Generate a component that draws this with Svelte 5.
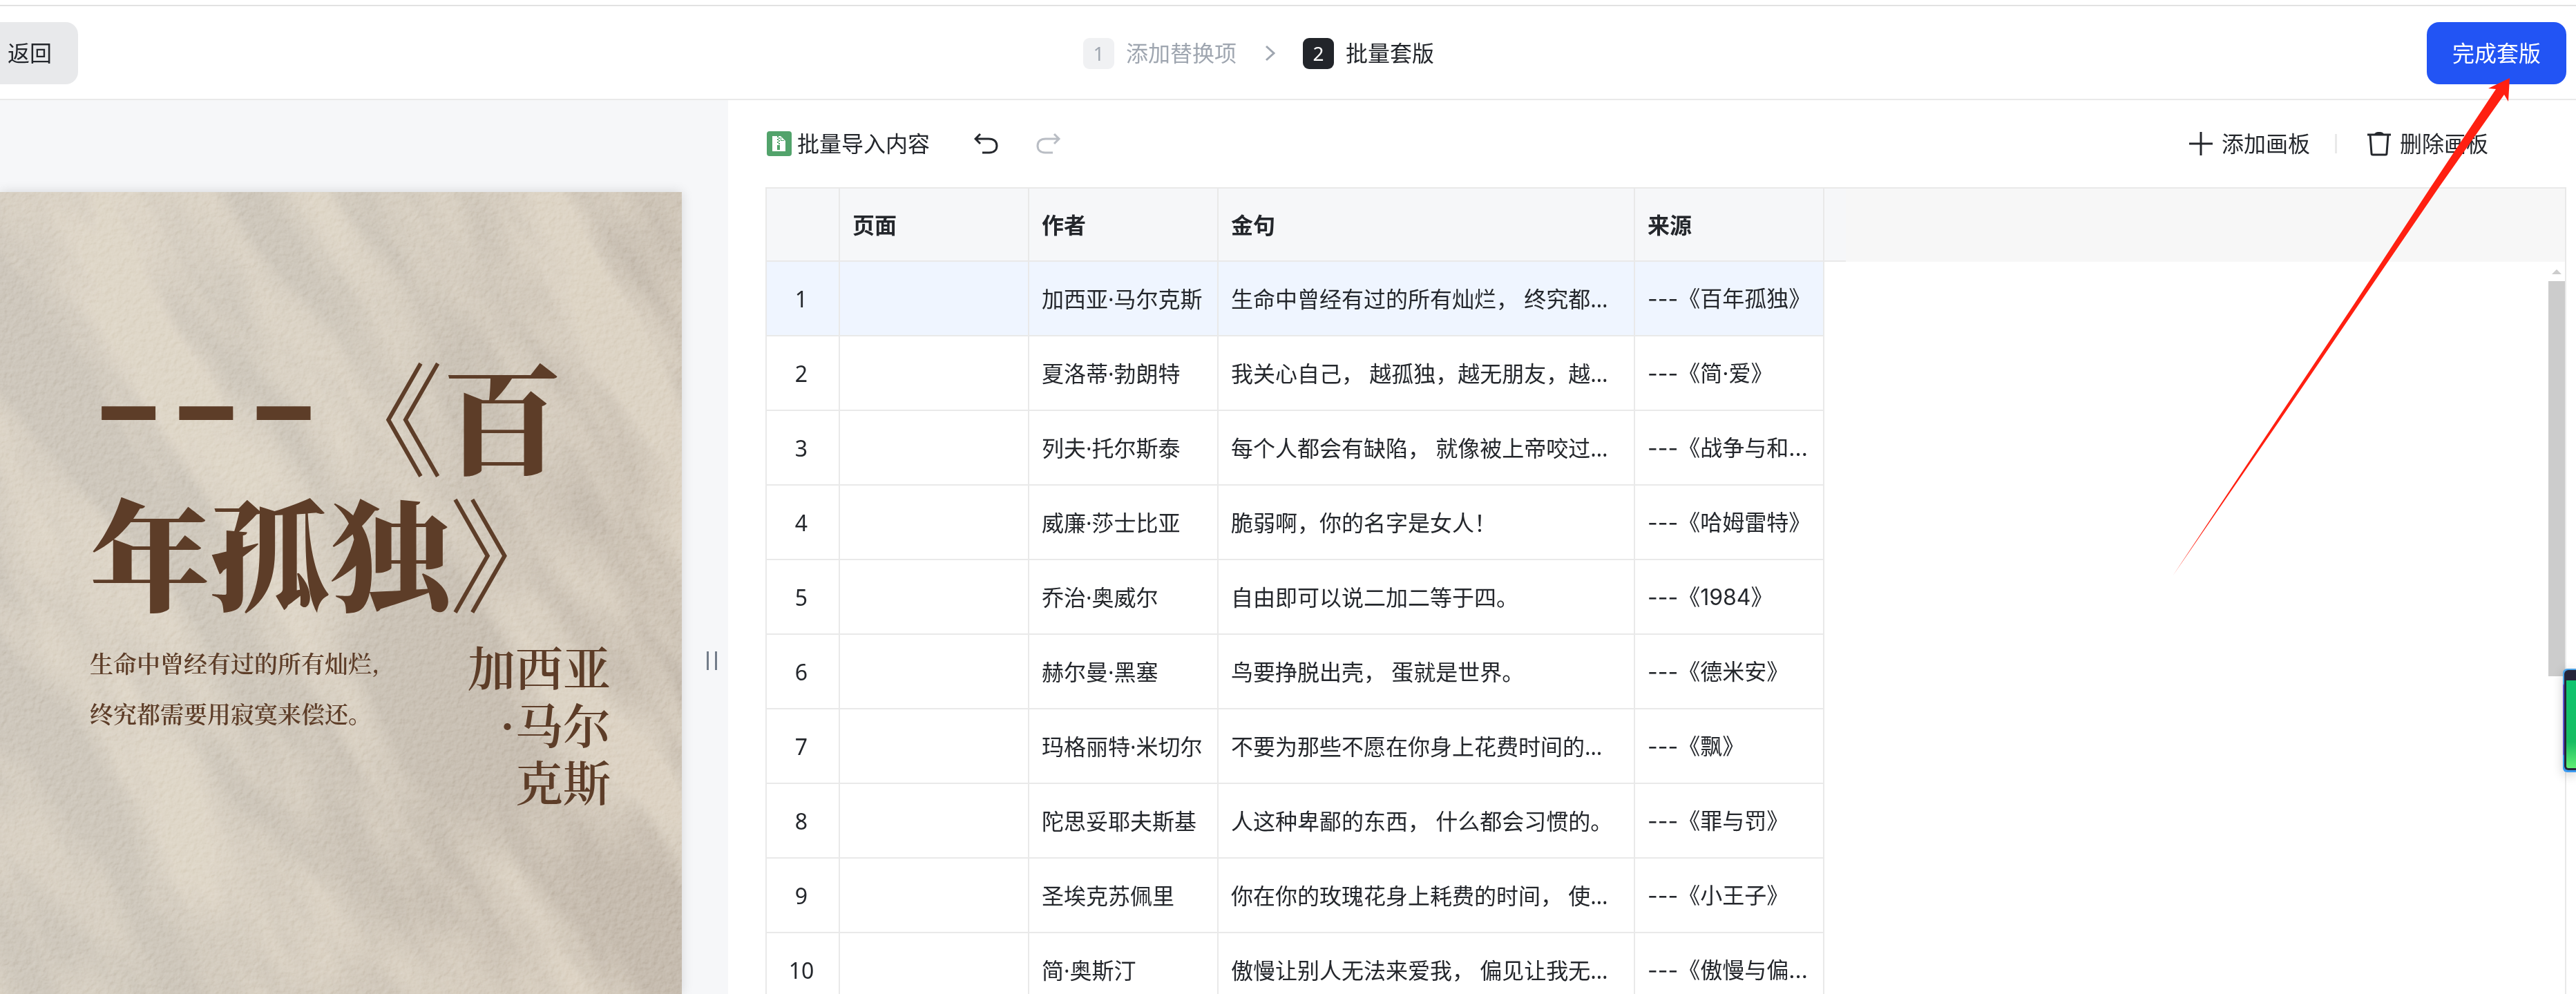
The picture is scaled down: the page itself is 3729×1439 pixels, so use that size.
<script>
	const columns = ['页面', '作者', '金句', '来源']

	let selected = 1

	const rows = [
		{ author: '加西亚·马尔克斯', quote: '生命中曾经有过的所有灿烂， 终究都…', source: '---《百年孤独》' },
		{ author: '夏洛蒂·勃朗特', quote: '我关心自己， 越孤独，越无朋友，越…', source: '---《简·爱》' },
		{ author: '列夫·托尔斯泰', quote: '每个人都会有缺陷， 就像被上帝咬过…', source: '---《战争与和…' },
		{ author: '威廉·莎士比亚', quote: '脆弱啊，你的名字是女人！', source: '---《哈姆雷特》' },
		{ author: '乔治·奥威尔', quote: '自由即可以说二加二等于四。', source: '---《1984》' },
		{ author: '赫尔曼·黑塞', quote: '鸟要挣脱出壳， 蛋就是世界。', source: '---《德米安》' },
		{ author: '玛格丽特·米切尔', quote: '不要为那些不愿在你身上花费时间的…', source: '---《飘》' },
		{ author: '陀思妥耶夫斯基', quote: '人这种卑鄙的东西， 什么都会习惯的。', source: '---《罪与罚》' },
		{ author: '圣埃克苏佩里', quote: '你在你的玫瑰花身上耗费的时间， 使…', source: '---《小王子》' },
		{ author: '简·奥斯汀', quote: '傲慢让别人无法来爱我， 偏见让我无…', source: '---《傲慢与偏…' },
	]
</script>

<div class="app">
	<header>
		<button class="back">返回</button>
		<ol class="steps">
			<li><span class="badge">1</span>添加替换项</li>
			<li class="chevron" aria-hidden="true">
				<svg width="16" height="24" viewBox="0 0 16 24"><path d="M3 2l11 10L3 22" /></svg>
			</li>
			<li class="current"><span class="badge">2</span>批量套版</li>
		</ol>
		<button class="finish">完成套版</button>
	</header>

	<main>
		<section class="preview">
			<article class="poster">
				<svg class="paper" aria-hidden="true">
					<defs>
						<linearGradient id="tone" x1="0" y1="0" x2="1" y2="0.3">
							<stop offset="0" stop-color="#cdc6bb" />
							<stop offset="0.45" stop-color="#cec7bb" />
							<stop offset="1" stop-color="#c5bbae" />
						</linearGradient>
						<filter id="folds" x="0" y="0" width="100%" height="100%" color-interpolation-filters="sRGB">
							<feTurbulence type="fractalNoise" baseFrequency="0.002 0.007" numOctaves="4" seed="8" />
							<feColorMatrix values="0 0 0 0 0.9  0 0 0 0 0.865  0 0 0 0 0.805  3.6 0 0 0 -1.4" />
						</filter>
						<filter id="grain" x="0" y="0" width="100%" height="100%" color-interpolation-filters="sRGB">
							<feTurbulence type="fractalNoise" baseFrequency="0.12" numOctaves="4" seed="3" />
							<feDiffuseLighting surfaceScale="1" lighting-color="#fff">
								<feDistantLight azimuth="225" elevation="32" />
							</feDiffuseLighting>
						</filter>
					</defs>
					<rect width="100%" height="100%" fill="url(#tone)" />
					<g transform="rotate(58 500 580)" opacity="0.7">
						<rect x="-500" y="-500" width="2000" height="2200" filter="url(#folds)" />
					</g>
					<rect class="grain" width="100%" height="100%" filter="url(#grain)" />
				</svg>
				<h1><span class="dashes">---</span>《百<br />年孤独》</h1>
				<div class="credits">
					<p class="quote">生命中曾经有过的所有灿烂,<br />终究都需要用寂寞来偿还。</p>
					<p class="author">加西亚<br />·马尔<br />克斯</p>
				</div>
			</article>
			<div class="splitter"><span></span></div>
		</section>

		<section class="workspace">
			<div class="toolbar">
				<button class="import">
					<svg class="zip" width="36" height="36" viewBox="0 0 36 36">
						<rect width="36" height="36" rx="4" fill="#52a36b" />
						<path d="M8 7h12l7 7v15H8z" fill="#fff" />
						<path d="M15 7h2v2h-2zM17 9h2v2h-2zM15 11h2v2h-2zM17 13h2v2h-2zM15 15h2v2h-2zM17 17h2v2h-2zM15 20h4v7h-4zM20 9h1v4h4v1h-5z" fill="#52a36b" />
					</svg>
					批量导入内容
				</button>
				<button class="undo" aria-label="撤销">
					<svg width="36" height="36" viewBox="0 0 36 36"><path d="M9 4L2 11l7 7M2 11h19c8 0 12 4 12 10s-4 10-11 10H12" /></svg>
				</button>
				<button class="redo" aria-label="重做" disabled>
					<svg width="36" height="36" viewBox="0 0 36 36"><path d="M26 4l7 7-7 7M33 11H14C6 11 2 15 2 21s4 10 11 10h11" /></svg>
				</button>
				<div class="actions">
					<button>
						<svg width="36" height="36" viewBox="0 0 36 36"><path d="M18 1v34M1 18h34" /></svg>
						添加画板
					</button>
					<i class="divider"></i>
					<button>
						<svg width="36" height="36" viewBox="0 0 36 36">
							<path d="M1 5h34M5 5l2 27q0 2 2 2h18q2 0 2-2l2-27" />
							<path d="M11 4q2-3 5-3h4q3 0 5 3z" fill="#24272c" stroke="none" />
						</svg>
						删除画板
					</button>
				</div>
			</div>

			<div class="sheet">
				<table>
					<thead>
						<tr>
							<th class="index"></th>
							{#each columns as column, i}
								<th class:wide={i === 2}>{column}</th>
							{/each}
							<th class="filler"></th>
						</tr>
					</thead>
					<tbody>
						{#each rows as row, i}
							<tr class:selected={selected === i + 1} on:click={() => selected = i + 1}>
								<td class="index">{i + 1}</td>
								<td></td>
								<td>{row.author}</td>
								<td>{row.quote}</td>
								<td class="source">{row.source}</td>
							</tr>
						{/each}
					</tbody>
				</table>
				<div class="scrollbar">
					<svg width="24" height="28" viewBox="0 0 24 28"><path d="M5 18l7-7 7 7z" fill="#ccc" stroke="none" /></svg>
					<div class="thumb"></div>
				</div>
			</div>
		</section>
	</main>

	<svg class="pointer" width="488" height="721" viewBox="0 0 488 721" aria-hidden="true">
		<path d="M488 0L457 15l11 1L373 159 263 327 156 487 0 721 161 487 270 327 385 159 480 24l6 10z" />
	</svg>
	<div class="dock"><span></span></div>
</div>

<style>
	:global(body) {
		margin: 0;
	}

	.app {
		position: relative;
		display: flex;
		flex-direction: column;
		height: 100vh;
		overflow: hidden;
		box-sizing: border-box;
		padding-top: 7px;
		background: #fff;
		color: #24272c;
		font: 32px/44px 'Noto Sans', 'Noto Sans CJK SC', sans-serif;
	}

	button {
		display: flex;
		align-items: center;
		padding: 0;
		border: 0;
		background: none;
		color: inherit;
		font: inherit;
		white-space: nowrap;
	}

	svg {
		flex: none;
		fill: none;
		stroke: currentColor;
		stroke-width: 3;
	}

	header {
		display: flex;
		flex: none;
		justify-content: space-between;
		align-items: center;
		padding: 23px 14px 21px 0;
		border-top: 2px solid #e2e2e2;
		border-bottom: 2px solid #e9e9e9;
	}

	.back,
	.finish {
		height: 90px;
		border-radius: 18px;
	}

	.back {
		padding: 0 38px 0 11px;
		border-radius: 0 18px 18px 0;
		background: #e8e9eb;
	}

	.finish {
		padding: 0 37px;
		background: #2254f4;
		color: #fff;
	}

	.steps {
		display: flex;
		align-items: center;
		gap: 40px;
		margin: 0;
		padding: 0 0 0 18px;
		list-style: none;
		color: #9fa6b0;
	}

	.steps li {
		display: flex;
		align-items: center;
		gap: 17px;
	}

	.badge {
		width: 45px;
		border-radius: 9px;
		background: #f0f1f3;
		font-size: 28px;
		line-height: 45px;
		text-align: center;
	}

	.steps .current {
		color: #24272c;
	}

	.current .badge {
		background: #22252a;
		color: #fff;
	}

	main {
		display: flex;
		flex: 1;
		min-height: 0;
	}

	.preview {
		display: flex;
		flex: 0 0 min(1054px, 30%);
		overflow: hidden;
		background: #f6f7f9;
	}

	.poster {
		position: relative;
		flex: 1;
		box-sizing: border-box;
		margin-top: 133px;
		padding: 223px 103px 0 130px;
		box-shadow: 0 0 16px #00000024;
		color: #5d3d28;
		font-family: 'Noto Serif CJK SC', 'Noto Sans CJK SC', serif;
		font-weight: 600;
	}

	.paper {
		position: absolute;
		inset: 0;
		width: 100%;
		height: 100%;
		stroke: none;
	}

	.grain {
		mix-blend-mode: soft-light;
		opacity: 0.5;
	}

	h1,
	.credits {
		position: relative;
		margin: 0;
	}

	h1 {
		font-size: 174px;
		line-height: 197px;
		font-weight: 900;
		white-space: nowrap;
	}

	.dashes {
		font: 244px/0 Inter, sans-serif;
	}

	.credits {
		display: flex;
		justify-content: space-between;
		margin-top: 28px;
	}

	.credits p {
		margin: 0;
		white-space: nowrap;
	}

	.quote {
		font-size: 34px;
		line-height: 73px;
	}

	.author {
		font-size: 69px;
		line-height: 83px;
		text-align: right;
	}

	.splitter {
		display: flex;
		flex: none;
		justify-content: center;
		width: 67px;
		box-sizing: border-box;
		padding: 798px 0 0 20px;
	}

	.splitter span {
		width: 9px;
		height: 27px;
		border: solid #737d8a;
		border-width: 0 3px;
	}

	.workspace {
		display: flex;
		flex: 1;
		flex-direction: column;
		min-width: 0;
		padding: 0 14px 0 54px;
	}

	.toolbar {
		display: flex;
		flex: none;
		align-items: center;
		height: 126px;
		padding: 0 113px 0 2px;
	}

	.import {
		gap: 8px;
	}

	.zip {
		stroke: none;
	}

	.undo {
		margin-left: 64px;
	}

	.redo {
		margin-left: 54px;
		color: #b9bdc4;
	}

	.actions {
		display: flex;
		align-items: center;
		margin-left: auto;
	}

	.actions button {
		gap: 12px;
	}

	.divider {
		width: 3px;
		height: 28px;
		margin: 0 43px 0 36px;
		background: #e9e9e9;
	}

	.sheet {
		display: flex;
		flex: 1;
		justify-content: space-between;
		align-items: flex-start;
		min-height: 0;
		border: solid #e9e9e9;
		border-width: 2px 2px 0;
		background: linear-gradient(#f7f7f7 106px, #fff 106px);
	}

	table {
		border-spacing: 0;
		table-layout: fixed;
		width: 1562px;
	}

	th,
	td {
		box-sizing: border-box;
		width: 274px;
		height: 108px;
		padding: 2px 18px 0;
		border: solid #e9e9e9;
		border-width: 0 2px 2px 0;
		text-align: left;
		white-space: nowrap;
	}

	th {
		height: 106px;
		background: #f6f7f9;
		font-weight: 700;
	}

	td {
		background: #fff;
	}

	.selected td {
		background: #eff5ff;
	}

	.index {
		width: 106px;
		padding-right: 22px;
		text-align: center;
	}

	.wide {
		width: 603px;
	}

	.filler {
		width: 31px;
		padding: 0;
		border-right: 0;
	}

	.source {
		font-family: Inter, 'Noto Sans CJK SC', sans-serif;
	}

	.scrollbar {
		align-self: stretch;
		display: flex;
		flex-direction: column;
		width: 24px;
		margin-top: 106px;
	}

	.thumb {
		height: 54%;
		background: #ccc;
	}

	.pointer {
		position: absolute;
		top: 113px;
		right: 96px;
		fill: #ff2011;
		stroke: none;
		pointer-events: none;
	}

	/* floating handle of the side dock, mostly past the window edge */
	.dock {
		position: absolute;
		top: 968px;
		right: 0;
		width: 19px;
		height: 150px;
		box-sizing: border-box;
		padding: 2px 0 3px 2px;
		border-radius: 6px 0 0 6px;
		background: linear-gradient(#4ba3e8 22px, #5a52d0 24px 124px, #3b9af0 126px);
		box-shadow: 0 4px 16px #0003;
	}

	.dock span {
		display: block;
		height: 100%;
		box-sizing: border-box;
		border: solid #25253a;
		border-width: 15px 0 3px 3px;
		border-radius: 6px 0 0 6px;
		background: linear-gradient(#0fc46f, #17bd62 70%, #62ef75);
	}
</style>
